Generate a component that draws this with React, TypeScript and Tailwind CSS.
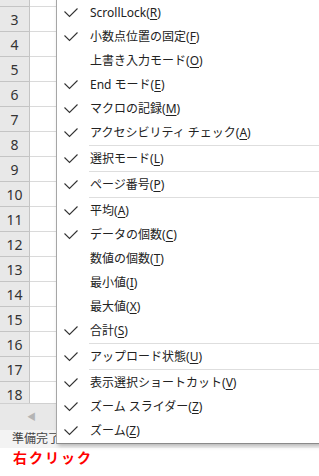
const rows = Array.from({ length: 17 }, (_, i) => i + 2);

type Item = { label: string; key?: string; checked: boolean } | 'sep';

const items: Item[] = [
  { label: 'ScrollLock', key: 'R', checked: true },
  { label: '小数点位置の固定', key: 'F', checked: true },
  { label: '上書き入力モード', key: 'O', checked: false },
  { label: 'End モード', key: 'E', checked: true },
  { label: 'マクロの記録', key: 'M', checked: true },
  { label: 'アクセシビリティ チェック', key: 'A', checked: true },
  'sep',
  { label: '選択モード', key: 'L', checked: true },
  'sep',
  { label: 'ページ番号', key: 'P', checked: true },
  'sep',
  { label: '平均', key: 'A', checked: true },
  { label: 'データの個数', key: 'C', checked: true },
  { label: '数値の個数', key: 'T', checked: false },
  { label: '最小値', key: 'I', checked: false },
  { label: '最大値', key: 'X', checked: false },
  { label: '合計', key: 'S', checked: true },
  'sep',
  { label: 'アップロード状態', key: 'U', checked: true },
  'sep',
  { label: '表示選択ショートカット', key: 'V', checked: true },
  { label: 'ズーム スライダー', key: 'Z', checked: true },
  { label: 'ズーム', key: 'Z', checked: true },
];

const Check = () => (
  <svg width="14" height="10" viewBox="0 0 14 10" className="text-[#333]">
    <polyline
      points="0.5,3.5 5.5,8.5 13.5,0.5"
      fill="none"
      stroke="currentColor"
      strokeWidth="1.1"
    />
  </svg>
);

const Menu = () => (
  <div className="absolute left-[56px] top-[-3px] w-[280px] border border-[#a6a6a6] border-b-[#8a8a8a] bg-white pt-[3px] shadow-[2px_2px_4px_rgba(0,0,0,0.25)]">
    {items.map((item, i) =>
      item === 'sep' ? (
        <div key={i} className="ml-[32px] h-[2px] border-t border-[#dedede]" />
      ) : (
        <div key={i} className="flex h-[24px] items-center">
          <div className="flex w-[33px] justify-start pl-[7px]">
            {item.checked && <Check />}
          </div>
          <span className="whitespace-nowrap text-[12px] text-[#222]">
            {item.label}(<span className="underline underline-offset-2">{item.key}</span>)
          </span>
        </div>
      ),
    )}
  </div>
);

export default function App() {
  return (
    <div
      className="relative h-[476px] w-[319px] overflow-hidden bg-white"
      style={{ fontFamily: '"Noto Sans", "Noto Sans CJK JP", sans-serif' }}
    >
      <div className="h-[403px] overflow-hidden">
        <div className="-mt-[18px] flex flex-col">
          {rows.map((r) => (
            <div key={r} className="flex h-[25px]">
              <div className="flex w-[30px] items-center justify-center border-b border-r border-[#c4c4c4] bg-[#e8e8e8] text-[14px] text-[#333]">
                {r > 2 ? r : ''}
              </div>
              <div className="flex-1 border-b border-[#dadada]" />
            </div>
          ))}
        </div>
      </div>
      <div className="flex h-[27px] items-center border-t border-[#d0d0d0] bg-[#e8e8e8] pl-[27px] text-[9px] text-[#b4b4b4]">
        ◀
      </div>
      <div className="flex h-[18px] items-center overflow-hidden whitespace-nowrap bg-[#f3f3f3] pl-[12px] text-[12px] text-[#444]">
        <span className="shrink-0">準備完了</span>
        <span className="ml-[20px] inline-block h-[10px] w-[10px] shrink-0 border border-[#555]" />
        <span className="ml-[24px] inline-block h-[8px] w-[8px] shrink-0 rounded-full bg-[#555]" />
        <span className="ml-[40px] shrink-0 text-[#444]">▬ ▪ ▬ ▬ ━━ ▪ ▬</span>
      </div>
      <div className="pl-[13px] pt-[1px] text-[14px] font-bold leading-[18px] tracking-[2px] text-[#ff0000]">
        右クリック
      </div>
      <Menu />
    </div>
  );
}
